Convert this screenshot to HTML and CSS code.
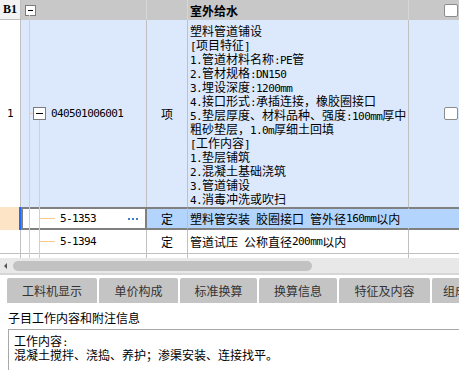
FILE: index.html
```html
<!DOCTYPE html>
<html lang="zh">
<head>
  <meta charset="UTF-8">
  <title>室外给水</title>
  <link rel="stylesheet" href="styles.css">
</head>
<body>
  <div class="grid">
    <div class="row head">
      <div class="c0">B1</div>
      <div class="c1"><span class="fold small"></span></div>
      <div class="c2"></div>
      <div class="c3">室外给水</div>
      <div class="c4"><span class="check"></span></div>
    </div>

    <div class="row item">
      <div class="c0"><span class="en">1</span></div>
      <div class="c1"><span class="fold"></span><span class="en code">040501006001</span></div>
      <div class="c2">项</div>
      <div class="c3">
        <div class="line">塑料管道铺设</div>
        <div class="line"><span class="en">[</span>项目特征<span class="en">]</span></div>
        <div class="line"><span class="en">1.</span>管道材料名称<span class="en">:PE</span>管</div>
        <div class="line"><span class="en">2.</span>管材规格<span class="en">:DN150</span></div>
        <div class="line"><span class="en">3.</span>埋设深度<span class="en">:1200mm</span></div>
        <div class="line"><span class="en">4.</span>接口形式<span class="en">:</span>承插连接，橡胶圈接口</div>
        <div class="line"><span class="en">5.</span>垫层厚度、材料品种、强度<span class="en">:100mm</span>厚中</div>
        <div class="line">粗砂垫层，<span class="en">1.0m</span>厚细土回填</div>
        <div class="line"><span class="en">[</span>工作内容<span class="en">]</span></div>
        <div class="line"><span class="en">1.</span>垫层铺筑</div>
        <div class="line"><span class="en">2.</span>混凝土基础浇筑</div>
        <div class="line"><span class="en">3.</span>管道铺设</div>
        <div class="line"><span class="en">4.</span>消毒冲洗或吹扫</div>
      </div>
      <div class="c4"><span class="check"></span></div>
    </div>

    <div class="row sel">
      <div class="c0"></div>
      <div class="c1">
        <span class="en">5-1353</span>
        <svg class="more" width="10" height="2" viewBox="0 0 10 2">
          <rect x="0" y="0" width="2" height="2"/>
          <rect x="4" y="0" width="2" height="2"/>
          <rect x="8" y="0" width="2" height="2"/>
        </svg>
      </div>
      <div class="c2">定</div>
      <div class="c3">塑料管安装<span class="en">&#160;</span>胶圈接口<span class="en">&#160;</span>管外径<span class="en">160mm</span>以内</div>
      <div class="c4"></div>
    </div>

    <div class="row plain">
      <div class="c0"></div>
      <div class="c1"><span class="en">5-1394</span></div>
      <div class="c2">定</div>
      <div class="c3">管道试压<span class="en">&#160;</span>公称直径<span class="en">200mm</span>以内</div>
      <div class="c4"></div>
    </div>

    <div class="row filler">
      <div class="c0"></div>
      <div class="c1"></div>
      <div class="c2"></div>
      <div class="c3"></div>
      <div class="c4"></div>
    </div>

    <!-- tree connector lines drawn over the code column -->
    <svg class="tree" width="40" height="258" viewBox="0 0 40 258">
      <line x1="8.5" y1="15" x2="8.5" y2="258"/>
      <line x1="18.5" y1="120" x2="18.5" y2="258"/>
      <line x1="9" y1="113.5" x2="12" y2="113.5"/>
      <line x1="19" y1="218.5" x2="34" y2="218.5"/>
      <line x1="19" y1="241.5" x2="34" y2="241.5"/>
    </svg>
  </div>

  <div class="hscroll">
    <span class="arrow"></span>
    <span class="thumb"></span>
  </div>

  <div class="tabs">
    <div class="tab w90">工料机显示</div>
    <div class="tab w79">单价构成</div>
    <div class="tab w77">标准换算</div>
    <div class="tab w78">换算信息</div>
    <div class="tab w91">特征及内容</div>
    <div class="tab w70">组成内容</div>
  </div>

  <div class="note-title">子目工作内容和附注信息</div>
  <div class="note">
    <div>工作内容<span class="en">:</span></div>
    <div>混凝土搅拌、浇捣、养护；渗渠安装、连接找平。</div>
  </div>
</body>
</html>
```

FILE: styles.css
```css
* {
  box-sizing: border-box;
}

body {
  margin: 0;
  width: 459px;
  height: 370px;
  overflow: hidden;
  background: #ffffff;
  color: #000000;
  font: 12px "Noto Sans CJK SC", sans-serif;
}

.en {
  font-family: "DejaVu Sans Mono", monospace;
  font-size: 11px;
  letter-spacing: -0.6px;
  line-height: 1;
}

/* grid */
.grid {
  position: relative;
}

.row {
  display: grid;
  grid-template-columns: 21px 126px 41px 221px 50px;
}

.row > div {
  display: flex;
  align-items: center;
  border-right: 1px solid #c0c0c0;
  white-space: nowrap;
  overflow: hidden;
}

.row > div:last-child {
  border-right: 0;
}

.c2 {
  justify-content: center;
}

.c3 {
  padding-left: 2px;
}

.head {
  height: 20px;
  background: #c8c8c8;
}

.head > div {
  border-right-color: #d6d6d6;
}

.head .c0 {
  background: #f2f2f2;
  border-right-color: #bdbdbd;
  border-bottom: 1px solid #bdbdbd;
  padding-left: 3px;
  font: bold 12px "Liberation Serif", serif;
}

.head .c1 {
  padding-left: 4px;
}

.head .c3 {
  font-weight: bold;
}

.head .c4,
.item .c4 {
  padding-left: 35px;
}

.item {
  height: 187px;
  background: #dce9fc;
}

.item .c0 {
  background: #ffffff;
  justify-content: center;
}

.item .c1 {
  padding-left: 12px;
}

.item .c3 {
  display: block;
  padding-top: 4px;
}

.line {
  height: 14px;
  line-height: 14px;
}

.code {
  margin-left: 5px;
}

.sel {
  height: 23px;
}

.sel .c0 {
  background: #fde4c6;
  border-right: 2px solid #1f6bff;
}

.sel .c1 {
  background: #ffffff;
  border: 2px solid #808080;
  padding: 0 7px 0 37px;
  justify-content: space-between;
}

.sel .c2,
.sel .c3,
.sel .c4 {
  background: #b3d4fc;
  border-top: 2px solid #808080;
  border-bottom: 2px solid #808080;
}

.sel .c3 {
  border-right-color: #b3d4fc;
}

.more {
  fill: #3d80c8;
}

.plain {
  height: 24px;
  border-bottom: 1px solid #c0c0c0;
}

.plain .c1 {
  padding-left: 39px;
}

.filler {
  height: 4px;
}

.tree {
  position: absolute;
  left: 21px;
  top: 0;
  pointer-events: none;
  stroke: #f8c88c;
  stroke-width: 1;
}

.fold {
  position: relative;
  width: 13px;
  height: 13px;
  flex: none;
  border: 1px solid #7c7c7c;
  background: #ffffff;
}

.fold::after {
  content: '';
  position: absolute;
  left: 2px;
  right: 2px;
  top: 5px;
  height: 1px;
  background: #000000;
}

.fold.small {
  width: 11px;
  height: 11px;
}

.fold.small::after {
  top: 4px;
}

.check {
  width: 14px;
  height: 13px;
  border: 1px solid #8c8c8c;
  border-radius: 2px;
  background: #ffffff;
}

/* horizontal scrollbar */
.hscroll {
  display: flex;
  align-items: center;
  height: 17px;
  padding-left: 4px;
  background: #e8e8e8;
  border-bottom: 2px solid #d6d6d6;
}

.arrow {
  width: 0;
  height: 0;
  border-top: 3px solid transparent;
  border-bottom: 3px solid transparent;
  border-right: 3px solid #555555;
}

.thumb {
  width: 299px;
  height: 10px;
  margin-left: 6px;
  border-radius: 5px;
  background: #c2c2c2;
}

/* tabs */
.tabs {
  display: flex;
  gap: 2px;
  height: 28px;
  padding: 3px 0 0 7px;
  overflow: hidden;
}

.tab {
  flex: none;
  height: 25px;
  line-height: 26px;
  text-align: center;
  color: #333333;
  background: #c4c4c4;
  border-radius: 2px 2px 0 0;
}

.w90 { width: 90px; }
.w79 { width: 79px; }
.w77 { width: 77px; }
.w78 { width: 78px; }
.w91 { width: 91px; }
.w70 { width: 70px; }

/* notes */
.note-title {
  height: 26px;
  padding: 8px 0 0 8px;
  line-height: 14px;
}

.note {
  width: 480px;
  height: 60px;
  margin-left: 8px;
  padding: 4px 0 0 5px;
  line-height: 14px;
  border: 1px solid #a8a8a8;
}
```
